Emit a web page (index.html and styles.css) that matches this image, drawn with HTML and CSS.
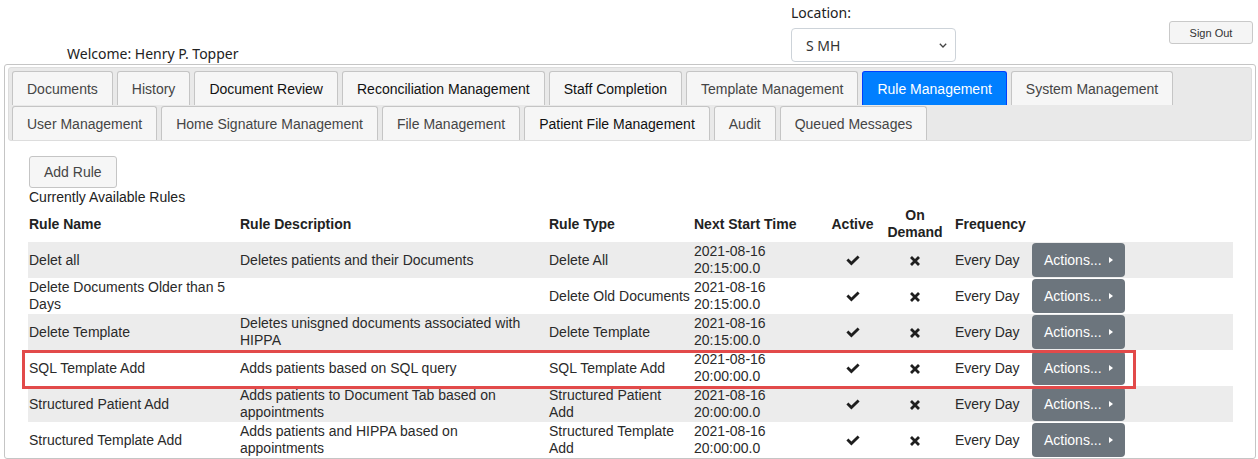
FILE: index.html
```html
<!DOCTYPE html>
<html lang="en">
<head>
<meta charset="utf-8">
<title>Rule Management</title>
<link rel="stylesheet" href="styles.css">
</head>
<body>
<div class="header">
  <div class="welcome">Welcome:&nbsp;Henry P. Topper</div>
  <div class="location">
    <div class="loc-label">Location:</div>
    <div class="select">
      <span>S MH</span>
      <svg class="chev" width="8" height="5" viewBox="0 0 8 5"><path d="M0.8 0.8 L4 4 L7.2 0.8" fill="none" stroke="#444" stroke-width="1.3"/></svg>
    </div>
  </div>
  <div class="signout-wrap"><button class="signout">Sign Out</button></div>
</div>

<div class="tabs">
  <ul class="nav">
    <li class="tab">Documents</li>
    <li class="tab">History</li>
    <li class="tab dark">Document Review</li>
    <li class="tab dark">Reconciliation Management</li>
    <li class="tab dark">Staff Completion</li>
    <li class="tab">Template Management</li>
    <li class="tab active">Rule Management</li>
    <li class="tab">System Management</li>
    <li class="tab">User Management</li>
    <li class="tab">Home Signature Management</li>
    <li class="tab">File Management</li>
    <li class="tab dark">Patient File Management</li>
    <li class="tab">Audit</li>
    <li class="tab">Queued Messages</li>
  </ul>

  <div class="panel">
    <button class="btn">Add Rule</button>
    <div class="caption">Currently Available Rules</div>
    <div class="table-wrap">
      <table class="rules">
        <colgroup>
          <col class="c-name"><col class="c-desc"><col class="c-type"><col class="c-next">
          <col class="c-active"><col class="c-demand"><col class="c-freq"><col class="c-act">
        </colgroup>
        <thead>
          <tr>
            <th>Rule Name</th>
            <th>Rule Description</th>
            <th>Rule Type</th>
            <th>Next Start Time</th>
            <th class="center">Active</th>
            <th class="center">On Demand</th>
            <th class="freq">Frequency</th>
            <th></th>
          </tr>
        </thead>
        <tbody>
          <tr>
            <td>Delet all</td>
            <td class="desc">Deletes patients and their Documents</td>
            <td>Delete All</td>
            <td>2021-08-16 20:15:00.0</td>
            <td class="center"><svg class="ok" width="14" height="11" viewBox="0 0 14 11"><path d="M0.4 5.6 L2.4 3.6 L5.4 6.6 L11.6 0.4 L13.6 2.4 L5.4 10.6 Z"/></svg></td>
            <td class="center"><svg class="no" width="10" height="10" viewBox="0 0 10 10"><path d="M1 1 L9 9 M9 1 L1 9"/></svg></td>
            <td class="freq">Every Day</td>
            <td><button class="actions">Actions...<span class="caret"></span></button></td>
          </tr>
          <tr>
            <td>Delete Documents Older than 5 Days</td>
            <td class="desc"></td>
            <td>Delete Old Documents</td>
            <td>2021-08-16 20:15:00.0</td>
            <td class="center"><svg class="ok" width="14" height="11" viewBox="0 0 14 11"><path d="M0.4 5.6 L2.4 3.6 L5.4 6.6 L11.6 0.4 L13.6 2.4 L5.4 10.6 Z"/></svg></td>
            <td class="center"><svg class="no" width="10" height="10" viewBox="0 0 10 10"><path d="M1 1 L9 9 M9 1 L1 9"/></svg></td>
            <td class="freq">Every Day</td>
            <td><button class="actions">Actions...<span class="caret"></span></button></td>
          </tr>
          <tr>
            <td>Delete Template</td>
            <td class="desc">Deletes unisgned documents associated with HIPPA</td>
            <td>Delete Template</td>
            <td>2021-08-16 20:15:00.0</td>
            <td class="center"><svg class="ok" width="14" height="11" viewBox="0 0 14 11"><path d="M0.4 5.6 L2.4 3.6 L5.4 6.6 L11.6 0.4 L13.6 2.4 L5.4 10.6 Z"/></svg></td>
            <td class="center"><svg class="no" width="10" height="10" viewBox="0 0 10 10"><path d="M1 1 L9 9 M9 1 L1 9"/></svg></td>
            <td class="freq">Every Day</td>
            <td><button class="actions">Actions...<span class="caret"></span></button></td>
          </tr>
          <tr>
            <td>SQL Template Add</td>
            <td class="desc">Adds patients based on SQL query</td>
            <td>SQL Template Add</td>
            <td>2021-08-16 20:00:00.0</td>
            <td class="center"><svg class="ok" width="14" height="11" viewBox="0 0 14 11"><path d="M0.4 5.6 L2.4 3.6 L5.4 6.6 L11.6 0.4 L13.6 2.4 L5.4 10.6 Z"/></svg></td>
            <td class="center"><svg class="no" width="10" height="10" viewBox="0 0 10 10"><path d="M1 1 L9 9 M9 1 L1 9"/></svg></td>
            <td class="freq">Every Day</td>
            <td><button class="actions">Actions...<span class="caret"></span></button></td>
          </tr>
          <tr>
            <td>Structured Patient Add</td>
            <td class="desc">Adds patients to Document Tab based on appointments</td>
            <td>Structured Patient<br>Add</td>
            <td>2021-08-16 20:00:00.0</td>
            <td class="center"><svg class="ok" width="14" height="11" viewBox="0 0 14 11"><path d="M0.4 5.6 L2.4 3.6 L5.4 6.6 L11.6 0.4 L13.6 2.4 L5.4 10.6 Z"/></svg></td>
            <td class="center"><svg class="no" width="10" height="10" viewBox="0 0 10 10"><path d="M1 1 L9 9 M9 1 L1 9"/></svg></td>
            <td class="freq">Every Day</td>
            <td><button class="actions">Actions...<span class="caret"></span></button></td>
          </tr>
          <tr>
            <td>Structured Template Add</td>
            <td class="desc">Adds patients and HIPPA based on appointments</td>
            <td>Structured Template Add</td>
            <td>2021-08-16 20:00:00.0</td>
            <td class="center"><svg class="ok" width="14" height="11" viewBox="0 0 14 11"><path d="M0.4 5.6 L2.4 3.6 L5.4 6.6 L11.6 0.4 L13.6 2.4 L5.4 10.6 Z"/></svg></td>
            <td class="center"><svg class="no" width="10" height="10" viewBox="0 0 10 10"><path d="M1 1 L9 9 M9 1 L1 9"/></svg></td>
            <td class="freq">Every Day</td>
            <td><button class="actions">Actions...<span class="caret"></span></button></td>
          </tr>
        </tbody>
      </table>
      <div class="highlight"></div>
    </div>
  </div>
</div>
</body>
</html>
```

FILE: styles.css
```css
body {
  margin: 0;
  font-family: "Liberation Sans", Arial, sans-serif;
  font-size: 14px;
  color: #333;
  background: #fff;
}

/* header */
.header {
  display: flex;
  height: 64px;
}
.welcome {
  width: 791px;
  box-sizing: border-box;
  padding: 45px 0 0 67px;
  font-family: "Noto Sans", sans-serif;
  font-size: 14px;
  line-height: 18px;
  color: #222;
}
.location {
  width: 378px;
  padding-top: 4px;
  font-family: "Noto Sans", sans-serif;
  color: #222;
}
.loc-label {
  font-size: 14px;
  line-height: 18px;
}
.select {
  margin-top: 6px;
  width: 165px;
  height: 34px;
  box-sizing: border-box;
  border: 1px solid #cdd3d9;
  border-radius: 4px;
  display: flex;
  align-items: center;
  justify-content: space-between;
  padding: 0 8px 0 14px;
  font-size: 14px;
  color: #333;
}
.chev { display: block; }
.signout-wrap { padding-top: 21px; }
.signout {
  width: 84px;
  height: 23px;
  padding: 0;
  font-family: "Liberation Sans", Arial, sans-serif;
  font-size: 11px;
  color: #333;
  background: #f5f5f5;
  border: 1px solid #c9c9c9;
  border-radius: 3px;
}

/* tabs */
.tabs {
  margin-left: 4px;
  width: 1252px;
  box-sizing: border-box;
  border: 1px solid #c5c5c5;
  border-radius: 3px;
  padding: 2px 3px 0;
}
.nav {
  display: flex;
  flex-wrap: wrap;
  gap: 1px 4px;
  margin: 0;
  padding: 3px 3px 0;
  list-style: none;
  background: #e9e9e9;
  border: 1px solid #dddddd;
  border-radius: 3px;
}
.tab {
  height: 34px;
  box-sizing: border-box;
  padding: 0 14px;
  line-height: 34px;
  border: 1px solid #c5c5c5;
  border-bottom: none;
  border-radius: 3px 3px 0 0;
  background: #f6f6f6;
  color: #454545;
  font-size: 14px;
  white-space: nowrap;
}
.tab.dark { color: #111; }
.tab.active {
  background: #007fff;
  border-color: #003eff;
  color: #fff;
}

/* panel */
.panel {
  padding: 15px 18px 0 20px;
}
.btn {
  margin-left: 1px;
  height: 32px;
  padding: 0 14px;
  font-family: "Liberation Sans", Arial, sans-serif;
  font-size: 14px;
  color: #454545;
  background: #f6f6f6;
  border: 1px solid #c5c5c5;
  border-radius: 3px;
  display: block;
}
.caption {
  margin-left: 1px;
  line-height: 17px;
  padding-top: 1px;
  color: #222;
}
.table-wrap { position: relative; }
.rules {
  width: 1205px;
  table-layout: fixed;
  border-collapse: collapse;
  border-spacing: 0;
  line-height: 17px;
  color: #2a2a2a;
}
.c-name { width: 211px; }
.c-desc { width: 309px; }
.c-type { width: 145px; }
.c-next { width: 130px; }
.c-active { width: 59px; }
.c-demand { width: 66px; }
.c-freq { width: 83px; }
.c-act { width: 202px; }
.rules th {
  padding: 1px;
  text-align: left;
  font-weight: bold;
  vertical-align: middle;
  color: #222;
}
.rules td {
  padding: 1px;
  vertical-align: middle;
}
.rules tbody tr:nth-child(odd) td { background: #ececec; }
.rules .center { text-align: center; }
.rules .freq { padding-left: 7px; }
.rules .desc { padding-right: 8px; }
.ok, .no { display: inline-block; vertical-align: middle; }
.ok path { fill: #1e1e1e; }
.no path { stroke: #1e1e1e; stroke-width: 2.8; fill: none; }
.actions {
  height: 34px;
  width: 93px;
  display: flex;
  align-items: center;
  gap: 7px;
  padding: 0 12px;
  background: #6c757d;
  color: #fff;
  border: none;
  border-radius: 4px;
  font-family: "Liberation Sans", Arial, sans-serif;
  font-size: 14px;
}
.caret {
  width: 0;
  height: 0;
  border-left: 4px solid #fff;
  border-top: 3.5px solid transparent;
  border-bottom: 3.5px solid transparent;
}
.highlight {
  position: absolute;
  left: -6px;
  top: 144px;
  width: 1114px;
  height: 39px;
  box-sizing: border-box;
  border: 3px solid #e24a4a;
  pointer-events: none;
}
```
